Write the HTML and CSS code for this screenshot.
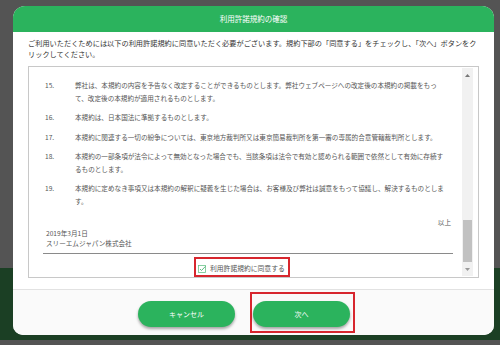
FILE: index.html
```html
<!DOCTYPE html>
<html lang="ja">
  <head>
    <meta charset="UTF-8" />
    <title>利用許諾規約の確認</title>
    <link rel="stylesheet" href="styles.css">
  </head>
  <body>
    <div class="modal">
      <div class="modal-header">利用許諾規約の確認</div>

      <div class="modal-body">
        <p class="intro">ご利用いただくためには以下の利用許諾規約に同意いただく必要がございます。規約下部の「同意する」をチェックし、「次へ」ボタンをクリックしてください。</p>

        <div class="scrollbox">
          <div class="terms">
            <ol class="term-list">
              <li><span class="num">15.</span><span class="txt">弊社は、本規約の内容を予告なく改定することができるものとします。弊社ウェブページへの改定後の本規約の掲載をもって、改定後の本規約が適用されるものとします。</span></li>
              <li><span class="num">16.</span><span class="txt">本規約は、日本国法に準拠するものとします。</span></li>
              <li><span class="num">17.</span><span class="txt">本規約に関連する一切の紛争については、東京地方裁判所又は東京簡易裁判所を第一審の専属的合意管轄裁判所とします。</span></li>
              <li><span class="num">18.</span><span class="txt">本規約の一部条項が法令によって無効となった場合でも、当該条項は法令で有効と認められる範囲で依然として有効に存続するものとします。</span></li>
              <li><span class="num">19.</span><span class="txt">本規約に定めなき事項又は本規約の解釈に疑義を生じた場合は、お客様及び弊社は誠意をもって協議し、解決するものとします。</span></li>
            </ol>

            <div class="closing">
              <p class="ijo">以上</p>
              <p>2019年3月1日</p>
              <p>スリーエムジャパン株式会社</p>
            </div>

            <hr>

            <label class="agree">
              <svg class="check" width="8" height="8" viewBox="0 0 8 8">
                <rect x="0.5" y="0.5" width="7" height="7" fill="none" stroke="#6cc48a" stroke-width="0.8"/>
                <polyline points="2,4 3.5,5.5 7.4,1.4" fill="none" stroke="#4cb573" stroke-width="0.9"/>
              </svg>
              利用許諾規約に同意する
            </label>
          </div>

          <div class="scrollbar">
            <div class="arrow">
              <svg width="5" height="3" viewBox="0 0 5 3"><polygon points="2.5,0 5,3 0,3" fill="#777"/></svg>
            </div>
            <div class="track"><div class="thumb"></div></div>
            <div class="arrow">
              <svg width="5" height="3" viewBox="0 0 5 3"><polygon points="0,0 5,0 2.5,3" fill="#999"/></svg>
            </div>
          </div>
        </div>
      </div>

      <div class="modal-footer">
        <button class="btn cancel">キャンセル</button>
        <div class="mark">
          <button class="btn">次へ</button>
        </div>
      </div>
    </div>
  </body>
</html>
```

FILE: styles.css
```css
html,
body {
  height: 345px;
}

body {
  margin: 0;
  overflow: hidden;
  font-family: "Noto Sans CJK JP", "Noto Sans", sans-serif;
  background: linear-gradient(
    to bottom,
    #545454 0,
    #545454 268px,
    #1b3f24 268px,
    #1b3f24 340px,
    #545454 340px
  );
}

.modal {
  margin: 6px 0 0 13px;
  width: 481px;
  background: white;
  border-radius: 12px 12px 10px 10px;
  overflow: hidden;
}

.modal-header {
  height: 26px;
  line-height: 26px;
  background-color: #2bb35d;
  color: white;
  text-align: center;
  font-size: 7.5px;
}

.modal-body {
  padding: 6px 15px 11px;
}

.intro {
  margin: 0 0 7px;
  font-size: 7.2px;
  line-height: 10.5px;
  color: #333;
}

.scrollbox {
  display: flex;
  height: 212px;
  box-sizing: border-box;
  border: 1px solid #c8c8c8;
  overflow: hidden;
}

.terms {
  flex: 1;
  padding: 12px 9px 0 14px;
  color: #555;
}

.term-list {
  list-style: none;
  margin: 0;
  padding: 0 7px 0 0;
}

.term-list li {
  display: flex;
  margin-bottom: 7px;
  font-size: 6.6px;
  line-height: 12.5px;
}

.term-list .num {
  width: 30px;
  padding-left: 2px;
  flex-shrink: 0;
}

.term-list .txt {
  flex: 1;
}

.closing {
  margin-top: 10px;
  font-size: 6.6px;
  line-height: 10.5px;
  padding-left: 3px;
}

.closing p {
  margin: 0;
}

.closing .ijo {
  text-align: right;
  padding-right: 2px;
}

hr {
  margin: 4px 0 0;
  border: none;
  border-top: 1px solid #8a8a8a;
}

.agree {
  display: inline-flex;
  align-items: center;
  gap: 4px;
  margin-left: 151px;
  padding: 4px 3px 1px 2px;
  border: 2px solid #d7262e;
  font-size: 6.8px;
  line-height: 11px;
  color: #555;
}

.check {
  display: block;
}

.scrollbar {
  width: 11px;
  margin: 1px 5px 1px 0;
  display: flex;
  flex-direction: column;
  background: #f1f1f1;
}

.arrow {
  height: 14px;
  display: flex;
  align-items: center;
  justify-content: center;
}

.track {
  flex: 1;
  display: flex;
  flex-direction: column;
  justify-content: flex-end;
}

.thumb {
  height: 42px;
  margin: 0 1px;
  background: #c1c1c1;
}

.modal-footer {
  display: flex;
  align-items: flex-start;
  height: 46px;
  box-sizing: border-box;
  padding: 2px 0 0 125px;
  border-top: 1px solid #e2e2e2;
  background: #fafafa;
}

.btn {
  width: 97px;
  height: 26px;
  border: none;
  border-radius: 13px;
  background-color: #2bb35d;
  color: white;
  font-family: "Noto Sans CJK JP", sans-serif;
  font-size: 7px;
  box-shadow: 0 2px 3px rgba(0, 0, 0, 0.35);
  cursor: pointer;
}

.cancel {
  margin: 9px 15px 0 0;
}

.mark {
  padding: 7px 3px 4px 1px;
  border: 2px solid #d7262e;
}

.mark .btn {
  display: block;
}
```
